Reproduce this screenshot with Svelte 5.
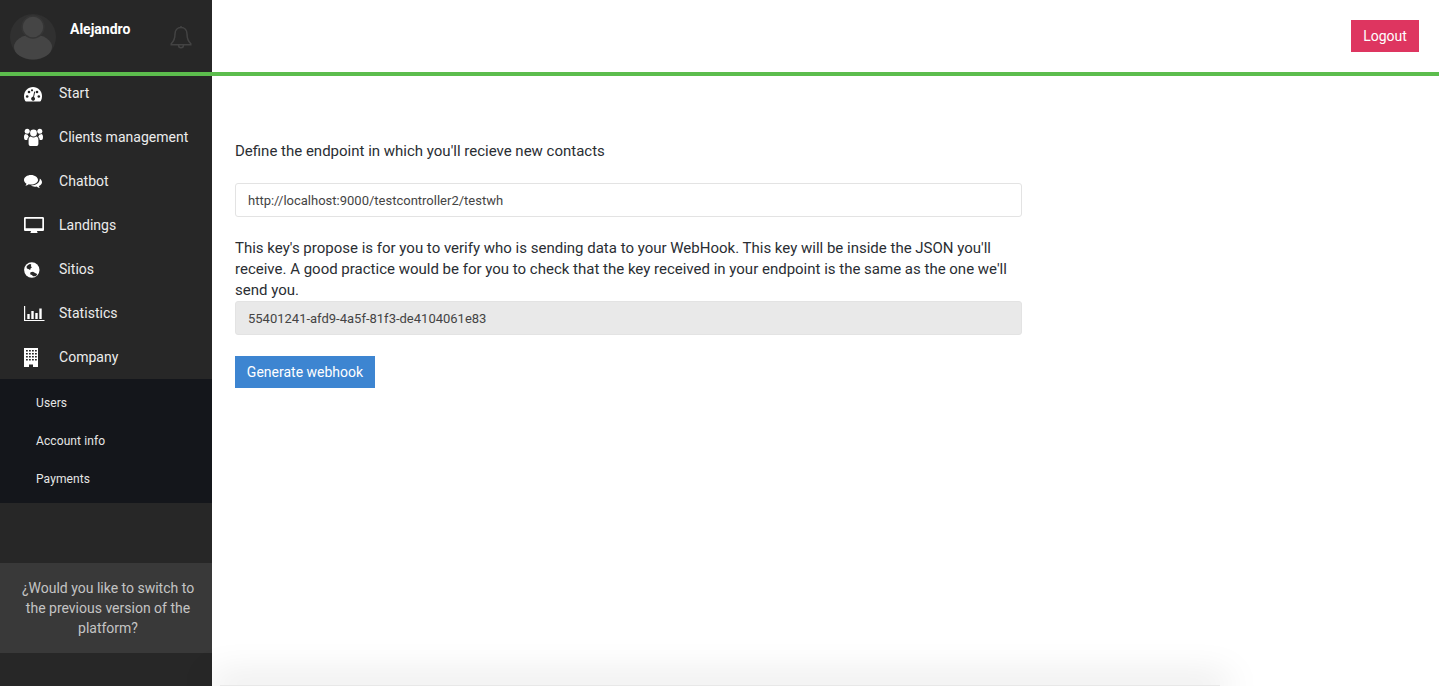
<script>
  const menu = [
    { label: 'Start', icon: 'gauge' },
    { label: 'Clients management', icon: 'users' },
    { label: 'Chatbot', icon: 'chat' },
    { label: 'Landings', icon: 'desktop' },
    { label: 'Sitios', icon: 'globe' },
    { label: 'Statistics', icon: 'bars' },
    { label: 'Company', icon: 'building' }
  ];
  const submenu = ['Users', 'Account info', 'Payments'];
</script>

<div class="page">
  <header class="topbar">
    <div class="profile">
      <svg class="avatar" viewBox="0 0 46 46">
        <circle cx="23" cy="23" r="23" fill="#303030" />
        <ellipse cx="23" cy="33" rx="19" ry="12.500" fill="#454545" />
        <circle cx="23" cy="13" r="11" fill="#454545" stroke="#353535" stroke-width="1.500" />
      </svg>
      <span class="name">Alejandro</span>
      <svg class="bell" viewBox="0 0 22 24" fill="none" stroke="#434343" stroke-width="1.500">
        <path d="M11 2.500C7.500 2.500 5 5 5 9c0 5-1.500 7.600-3.800 9.800v1h19.600v-1C18.500 16.600 17 14 17 9c0-4-2.500-6.500-6-6.500z" />
        <path d="M11 1v1.500M8.500 20c0 1.700 1.100 2.800 2.500 2.800s2.500-1.100 2.500-2.800" />
      </svg>
    </div>
    <div class="actions">
      <button class="logout">Logout</button>
    </div>
  </header>

  <div class="body">
    <aside class="sidebar">
      <nav class="menu">
        {#each menu as item}
          <a class="item" href="#top">
            <svg class="icon" viewBox="0 0 22 22" fill="#fff">
              {#if item.icon === 'gauge'}
                <path d="M10 5C5 5 1 9 1 14.200c0 1.800.4 3.300 1.200 4.800.2.300.5.500.8.500h14c.3 0 .6-.2.800-.5.800-1.500 1.200-3 1.200-4.800C19 9 15 5 10 5z" />
                <g fill="#272727">
                  <circle cx="4.200" cy="14.500" r="1.300" />
                  <circle cx="6" cy="10" r="1.300" />
                  <circle cx="15.800" cy="14.500" r="1.300" />
                  <circle cx="14" cy="10" r="1.300" />
                  <circle cx="9" cy="8.300" r="1.100" />
                  <path d="M11.200 9.500l1 .3-1.200 5.200c.8.500 1.200 1.300 1 2.200-.2 1-1.200 1.800-2.300 1.500-1.100-.2-1.800-1.300-1.500-2.400.2-.9 1-1.600 1.900-1.600z" />
                </g>
              {:else if item.icon === 'users'}
                <circle cx="10.500" cy="7" r="3.400" />
                <circle cx="4.200" cy="5.200" r="2.500" />
                <circle cx="16.800" cy="5.200" r="2.500" />
                <path d="M5.600 13.500c0-1.500 1-2.900 2.300-2.900.7.600 1.600 1 2.600 1s1.900-.4 2.600-1c1.300 0 2.300 1.400 2.300 2.900v4.200c0 1.500-1 2.300-2.200 2.300H7.800c-1.200 0-2.200-.8-2.200-2.300z" />
                <path d="M1 10.800c0-1.500.8-2.800 1.800-2.800.6.500 1.300.7 2 .7.200 1.100.7 1.700 1.100 2.200-1 .6-1.600 1.700-1.600 3H2.500C1.500 13.900 1 13 1 10.800zM20 10.800c0-1.500-.8-2.800-1.800-2.800-.6.500-1.300.7-2 .7-.2 1.100-.7 1.700-1.100 2.200 1 .6 1.600 1.700 1.600 3h1.800c1 0 1.500-.9 1.500-3.100z" />
              {:else if item.icon === 'chat'}
                <path d="M8 5C4.100 5 1 7.200 1 10c0 1.500.9 2.900 2.500 3.800-.2.800-.6 1.400-1.100 2 1.200-.2 2.400-.8 3.400-1.500.7.100 1.500.2 2.200.2 3.900 0 7-2.100 7-4.500S11.900 5 8 5z" />
                <path d="M16.700 8.300c.1.500.1 1.100 0 1.700-.4 2.900-3.800 5.300-8.700 5.500.9.700 2.300 1.200 3.900 1.200.6 0 1.100 0 1.700-.2.900.8 2 1.300 3.200 1.500-.4-.6-.8-1.200-1-1.900 1.700-.7 3.200-2.200 3.200-3.800 0-1.600-.9-3-2.300-3.900z" />
              {:else if item.icon === 'desktop'}
                <path fill-rule="evenodd" d="M2.300 3h17.400c.7 0 1.300.6 1.300 1.300v11.400c0 .7-.6 1.300-1.300 1.300H14c0 .8.400 1.400.7 2H7.300c.3-.6.700-1.200.7-2H2.300c-.7 0-1.300-.6-1.300-1.300V4.300C1 3.600 1.600 3 2.300 3zm.4 1.800v9.400h16.600V4.800z" />
              {:else if item.icon === 'globe'}
                <circle cx="8.800" cy="12" r="7.700" />
                <path fill="#272727" d="M3.500 8.800C4.300 7.300 5.700 6.200 7.300 5.900l1 .9-.5 1.400 1.200 1-1.300 1-.6 1.700-1.700-1-1.500-.4zM13.600 17.500c-1.100.7-2.300 1-3.400.8l-1.400-1.400-1.700-.7.400-2 2.500-.5 2.100 1.300 2 1z" />
              {:else if item.icon === 'bars'}
                <path d="M1 4h1.200v13.900h19.300V19H1z" />
                <rect x="4.300" y="12" width="2.400" height="5" />
                <rect x="8.300" y="9" width="2.400" height="8" />
                <rect x="12.300" y="11" width="2.400" height="6" />
                <rect x="16.300" y="6.500" width="2.400" height="10.500" />
              {:else}
                <path fill-rule="evenodd" d="M1 2h14v19h-5v-2.500H6V21H1zM3 4v1.600h1.800V4zm3 0v1.600h1.800V4zm3 0v1.600h1.800V4zm3 0v1.600h1.800V4zM3 7v1.600h1.800V7zm3 0v1.600h1.800V7zm3 0v1.600h1.800V7zm3 0v1.600h1.800V7zM3 10v1.600h1.800V10zm3 0v1.600h1.800V10zm3 0v1.600h1.800V10zm3 0v1.600h1.800V10zM3 13v1.600h1.800V13zm3 0v1.600h1.800V13zm3 0v1.600h1.800V13zm3 0v1.600h1.800V13z" />
              {/if}
            </svg>
            <span>{item.label}</span>
          </a>
        {/each}
      </nav>
      <ul class="submenu">
        {#each submenu as sub}
          <li><a href="#top">{sub}</a></li>
        {/each}
      </ul>
      <div class="switch">¿Would you like to switch to the previous version of the platform?</div>
    </aside>

    <main class="content">
      <section class="form">
        <p class="lead">Define the endpoint in which you'll recieve new contacts</p>
        <input class="field" type="text" value="http://localhost:9000/testcontroller2/testwh" />
        <p class="note">This key's propose is for you to verify who is sending data to your WebHook. This key will be inside the JSON you'll receive. A good practice would be for you to check that the key received in your endpoint is the same as the one we'll send you.</p>
        <input class="field locked" type="text" readonly value="55401241-afd9-4a5f-81f3-de4104061e83" />
        <button class="generate">Generate webhook</button>
      </section>
      <div class="shelf"></div>
    </main>
  </div>
</div>

<style>
  :global(body) {
    margin: 0;
    font-family: Roboto, "Liberation Sans", sans-serif;
    background: #fff;
  }

  .page {
    height: 100vh;
    display: flex;
    flex-direction: column;
    overflow: hidden;
  }

  .topbar {
    position: relative;
    z-index: 1;
    flex: none;
    height: 72px;
    display: flex;
    border-bottom: 4px solid #5cbd4d;
    background: #fff;
  }

  .profile {
    width: 212px;
    display: flex;
    align-items: flex-start;
    background: #272727;
  }

  .avatar {
    width: 46px;
    height: 46px;
    margin: 14px 0 0 10px;
  }

  .name {
    margin: 20px 0 0 14px;
    font-size: 14px;
    line-height: 18px;
    font-weight: 700;
    color: #fff;
  }

  .bell {
    width: 22px;
    height: 24px;
    margin: 25px 20px 0 auto;
  }

  .actions {
    flex: 1;
    display: flex;
    justify-content: flex-end;
    align-items: flex-start;
    padding: 20px 20px 0 0;
  }

  button {
    border: none;
    border-radius: 0;
    color: #fff;
    font-family: inherit;
    font-size: 14px;
  }

  .logout {
    width: 68px;
    height: 32px;
    background: #de3560;
  }

  .body {
    flex: 1;
    min-height: 0;
    display: flex;
  }

  .sidebar {
    width: 212px;
    flex: none;
    display: flex;
    flex-direction: column;
    background: #272727;
  }

  .menu {
    margin-top: -5px;
  }

  .item {
    height: 44px;
    display: flex;
    align-items: center;
    color: #ececec;
    font-size: 14px;
    letter-spacing: .03px;
    text-decoration: none;
  }

  .icon {
    width: 22px;
    height: 22px;
    margin: 0 14px 0 23px;
    flex: none;
  }

  .submenu {
    margin: 0;
    padding: 5px 0;
    list-style: none;
    background: #14161b;
  }

  .submenu li {
    height: 38px;
    display: flex;
    align-items: center;
    padding-left: 36px;
  }

  .submenu a {
    color: #e6e6e6;
    font-size: 12px;
    letter-spacing: .1px;
    text-decoration: none;
  }

  .switch {
    margin-top: 60px;
    height: 90px;
    box-sizing: border-box;
    padding: 15px 12px 15px 16px;
    background: #393939;
    color: #c4c4c4;
    font-size: 14px;
    line-height: 20px;
    text-align: center;
  }

  .content {
    flex: 1;
    min-width: 0;
    display: flex;
    flex-direction: column;
    justify-content: space-between;
  }

  .form {
    width: 787px;
    margin: 65px 0 0 23px;
    display: flex;
    flex-direction: column;
    align-items: flex-start;
    color: #2a2e33;
    font-size: 15px;
  }

  .lead {
    margin: 0 0 22px;
    line-height: 20px;
  }

  .note {
    margin: 21px 0 0;
    line-height: 21px;
  }

  .field {
    width: 100%;
    height: 34px;
    box-sizing: border-box;
    padding: 0 12px;
    border: 1px solid #e3e3e3;
    border-radius: 3px;
    background: #fff;
    color: #444;
    font-family: inherit;
    font-size: 13px;
    outline: none;
  }

  .locked {
    background: #e9e9e9;
  }

  .generate {
    width: 140px;
    height: 32px;
    margin-top: 21px;
    background: #3d85d1;
  }

  .shelf {
    height: 1px;
    margin: 0 219px 0 8px;
    background: #e8e8e8;
    box-shadow: 0 0 36px 8px rgba(0, 0, 0, .13);
  }
</style>
